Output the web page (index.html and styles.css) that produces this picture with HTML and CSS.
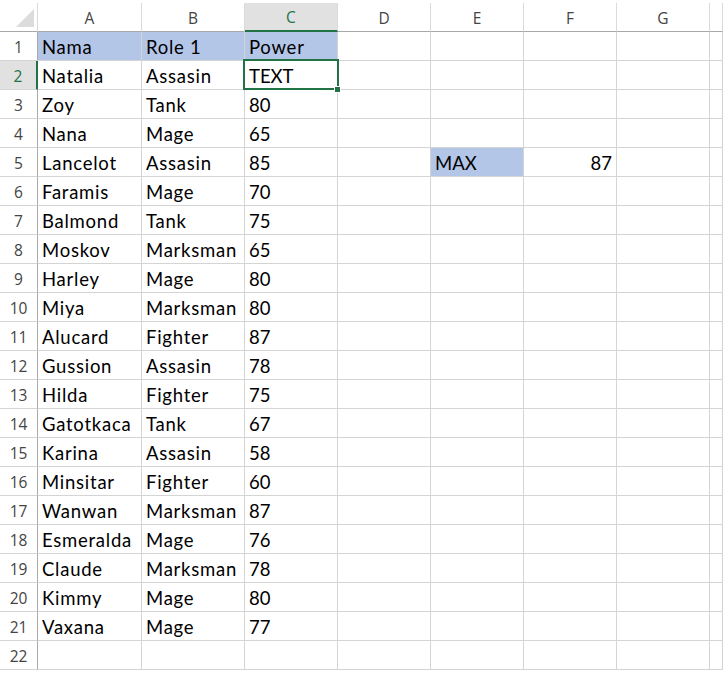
FILE: index.html
```html
<!DOCTYPE html>
<html>
<head>
<meta charset="utf-8">
<link rel="stylesheet" href="styles.css">
</head>
<body>
<div class="sheet">
  <div class="row head">
    <div class="corner"><span class="tri"></span></div>
    <div class="ch">A</div><div class="ch">B</div><div class="ch sel">C</div><div class="ch">D</div><div class="ch">E</div><div class="ch">F</div><div class="ch">G</div><div class="ch"></div>
  </div>
  <div class="row"><div class="rh">1</div><div class="c t fill">Nama</div><div class="c t fill">Role 1</div><div class="c t fill">Power</div><div class="c"></div><div class="c"></div><div class="c"></div><div class="c"></div><div class="c"></div></div>
  <div class="row"><div class="rh sel">2</div><div class="c t">Natalia</div><div class="c t">Assasin</div><div class="c active">TEXT<span class="handle"></span></div><div class="c"></div><div class="c"></div><div class="c"></div><div class="c"></div><div class="c"></div></div>
  <div class="row"><div class="rh">3</div><div class="c t">Zoy</div><div class="c t">Tank</div><div class="c">80</div><div class="c"></div><div class="c"></div><div class="c"></div><div class="c"></div><div class="c"></div></div>
  <div class="row"><div class="rh">4</div><div class="c t">Nana</div><div class="c t">Mage</div><div class="c">65</div><div class="c"></div><div class="c"></div><div class="c"></div><div class="c"></div><div class="c"></div></div>
  <div class="row"><div class="rh">5</div><div class="c t">Lancelot</div><div class="c t">Assasin</div><div class="c">85</div><div class="c"></div><div class="c fill">MAX</div><div class="c num">87</div><div class="c"></div><div class="c"></div></div>
  <div class="row"><div class="rh">6</div><div class="c t">Faramis</div><div class="c t">Mage</div><div class="c">70</div><div class="c"></div><div class="c"></div><div class="c"></div><div class="c"></div><div class="c"></div></div>
  <div class="row"><div class="rh">7</div><div class="c t">Balmond</div><div class="c t">Tank</div><div class="c">75</div><div class="c"></div><div class="c"></div><div class="c"></div><div class="c"></div><div class="c"></div></div>
  <div class="row"><div class="rh">8</div><div class="c t">Moskov</div><div class="c t">Marksman</div><div class="c">65</div><div class="c"></div><div class="c"></div><div class="c"></div><div class="c"></div><div class="c"></div></div>
  <div class="row"><div class="rh">9</div><div class="c t">Harley</div><div class="c t">Mage</div><div class="c">80</div><div class="c"></div><div class="c"></div><div class="c"></div><div class="c"></div><div class="c"></div></div>
  <div class="row"><div class="rh">10</div><div class="c t">Miya</div><div class="c t">Marksman</div><div class="c">80</div><div class="c"></div><div class="c"></div><div class="c"></div><div class="c"></div><div class="c"></div></div>
  <div class="row"><div class="rh">11</div><div class="c t">Alucard</div><div class="c t">Fighter</div><div class="c">87</div><div class="c"></div><div class="c"></div><div class="c"></div><div class="c"></div><div class="c"></div></div>
  <div class="row"><div class="rh">12</div><div class="c t">Gussion</div><div class="c t">Assasin</div><div class="c">78</div><div class="c"></div><div class="c"></div><div class="c"></div><div class="c"></div><div class="c"></div></div>
  <div class="row"><div class="rh">13</div><div class="c t">Hilda</div><div class="c t">Fighter</div><div class="c">75</div><div class="c"></div><div class="c"></div><div class="c"></div><div class="c"></div><div class="c"></div></div>
  <div class="row"><div class="rh">14</div><div class="c t">Gatotkaca</div><div class="c t">Tank</div><div class="c">67</div><div class="c"></div><div class="c"></div><div class="c"></div><div class="c"></div><div class="c"></div></div>
  <div class="row"><div class="rh">15</div><div class="c t">Karina</div><div class="c t">Assasin</div><div class="c">58</div><div class="c"></div><div class="c"></div><div class="c"></div><div class="c"></div><div class="c"></div></div>
  <div class="row"><div class="rh">16</div><div class="c t">Minsitar</div><div class="c t">Fighter</div><div class="c">60</div><div class="c"></div><div class="c"></div><div class="c"></div><div class="c"></div><div class="c"></div></div>
  <div class="row"><div class="rh">17</div><div class="c t">Wanwan</div><div class="c t">Marksman</div><div class="c">87</div><div class="c"></div><div class="c"></div><div class="c"></div><div class="c"></div><div class="c"></div></div>
  <div class="row"><div class="rh">18</div><div class="c t">Esmeralda</div><div class="c t">Mage</div><div class="c">76</div><div class="c"></div><div class="c"></div><div class="c"></div><div class="c"></div><div class="c"></div></div>
  <div class="row"><div class="rh">19</div><div class="c t">Claude</div><div class="c t">Marksman</div><div class="c">78</div><div class="c"></div><div class="c"></div><div class="c"></div><div class="c"></div><div class="c"></div></div>
  <div class="row"><div class="rh">20</div><div class="c t">Kimmy</div><div class="c t">Mage</div><div class="c">80</div><div class="c"></div><div class="c"></div><div class="c"></div><div class="c"></div><div class="c"></div></div>
  <div class="row"><div class="rh">21</div><div class="c t">Vaxana</div><div class="c t">Mage</div><div class="c">77</div><div class="c"></div><div class="c"></div><div class="c"></div><div class="c"></div><div class="c"></div></div>
  <div class="row"><div class="rh">22</div><div class="c"></div><div class="c"></div><div class="c"></div><div class="c"></div><div class="c"></div><div class="c"></div><div class="c"></div><div class="c"></div></div>
</div>
</body>
</html>
```
FILE: styles.css
```css
html, body {
  margin: 0;
  padding: 0;
  background: #ffffff;
}
body {
  width: 723px;
  height: 673px;
  overflow: hidden;
}
.sheet {
  padding-top: 3px;
}
.row {
  display: grid;
  grid-template-columns: 38px 104px 103px 93px 93px 93px 93px 93px 1fr;
  height: 29px;
}
.row > div {
  box-sizing: border-box;
  border-right: 1px solid #d4d4d4;
  border-bottom: 1px solid #d4d4d4;
  height: 29px;
}
.head > div {
  border-bottom: 1px solid #a8a8a8;
  border-right: 1px solid #dadada;
}
.ch {
  display: flex;
  align-items: center;
  justify-content: center;
  font-family: "Open Sans", "Noto Sans", sans-serif;
  font-size: 15.5px;
  color: #444444;
  padding-top: 1px;
}
.ch.sel {
  background: #e1e1e1;
  color: #217346;
  border-bottom: 2px solid #217346 !important;
}
.corner {
  position: relative;
}
.tri {
  position: absolute;
  left: 16px;
  top: 6px;
  width: 0;
  height: 0;
  border-style: solid;
  border-width: 0 0 18px 18px;
  border-color: transparent transparent #dcdcdc transparent;
}
.rh {
  display: flex;
  align-items: center;
  justify-content: center;
  font-family: "Open Sans", "Noto Sans", sans-serif;
  font-size: 15.5px;
  color: #444444;
  border-right: 1px solid #ababab !important;
  padding-top: 2px;
}
.rh.sel {
  background: #e1e1e1;
  color: #217346;
  border-right: 2px solid #217346 !important;
}
.c {
  display: flex;
  align-items: center;
  padding: 2px 4px 0 4px;
  font-family: "Lato", "Open Sans", sans-serif;
  font-size: 18.5px;
  color: #000000;
  white-space: nowrap;
  overflow: visible;
}
.t {
  letter-spacing: 0.75px;
}
.fill {
  background: #b4c6e7;
}
.num {
  justify-content: flex-end;
}
.active {
  position: relative;
}
.active::after {
  content: "";
  position: absolute;
  left: -2px;
  top: -2px;
  right: -2px;
  bottom: -1px;
  border: 2px solid #217346;
  pointer-events: none;
}
.handle {
  position: absolute;
  right: -4px;
  bottom: -4px;
  width: 5px;
  height: 5px;
  background: #217346;
  border: 1px solid #ffffff;
  z-index: 2;
}
```
